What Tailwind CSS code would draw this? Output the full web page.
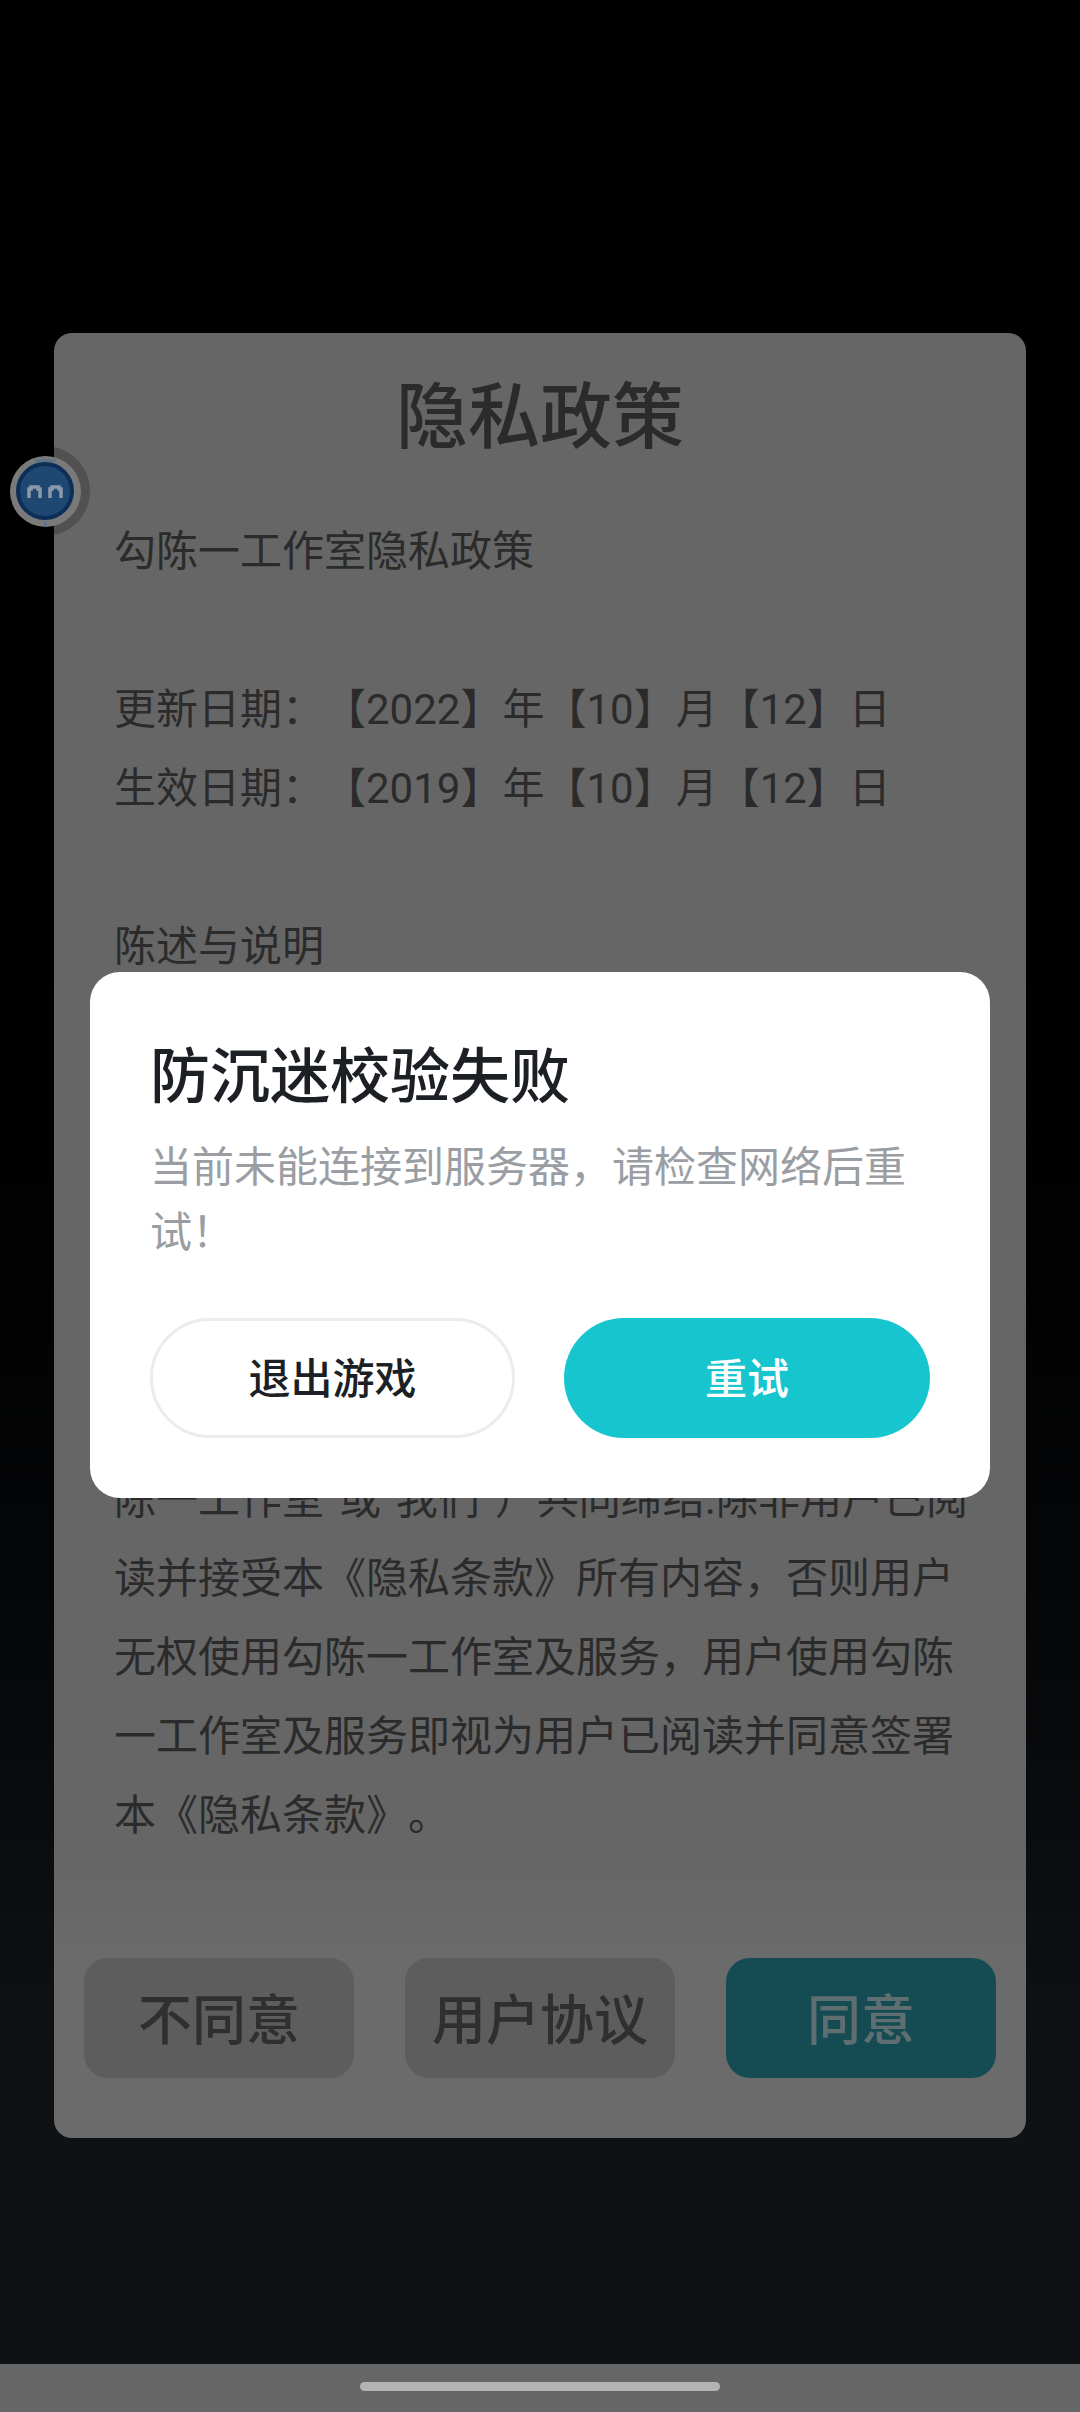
<!DOCTYPE html>
<html lang="zh-CN">
<head>
    <meta charset="UTF-8">
    <meta name="viewport" content="width=device-width, initial-scale=1.0">
    <title>隐私政策</title>
    <script src="https://cdn.jsdelivr.net/npm/@tailwindcss/browser@4"></script>
</head>

<body class="relative w-[1080px] h-[2412px] overflow-hidden flex flex-col bg-gradient-to-b from-black from-25% to-[#0f1215] to-85% [text-spacing-trim:space-all] font-['Roboto','Noto_Sans_CJK_SC',sans-serif]">

    <!-- Privacy panel (dimmed) -->
    <main class="flex-1 pt-[333px] px-[54px]">
        <section class="h-[1805px] rounded-[18px] bg-gradient-to-b from-[#666666] from-85% to-[#6b6b6b] to-90% flex flex-col">

            <h1 class="h-[164px] pt-[6px] flex items-center justify-center text-[72px] font-medium text-[#2b2b2b]">隐私政策</h1>

            <div class="px-[60px] text-[42px] leading-[79px] text-[#2b2b2b] whitespace-nowrap mt-[15px]">
                <p>勾陈一工作室隐私政策</p>
                <p class="h-[79px]"></p>
                <p>更新日期：【2022】年【10】月【12】日</p>
                <p>生效日期：【2019】年【10】月【12】日</p>
                <p class="h-[79px]"></p>
                <p>陈述与说明</p>
                <!-- lines behind the dialog -->
                <div class="h-[474px]"></div>
                <p>陈一工作室”或“我们”）共同缔结.除非用户已阅</p>
                <p>读并接受本《隐私条款》所有内容，否则用户</p>
                <p>无权使用勾陈一工作室及服务，用户使用勾陈</p>
                <p>一工作室及服务即视为用户已阅读并同意签署</p>
                <p>本《隐私条款》。</p>
            </div>

            <div class="mt-auto mb-[60px] px-[30px] flex justify-between text-[54px] font-medium">
                <button class="w-[270px] h-[120px] pt-[6px] rounded-[24px] bg-[#5d5d5d] text-[#2f2f2f]">不同意</button>
                <button class="w-[270px] h-[120px] pt-[6px] rounded-[24px] bg-[#5d5d5d] text-[#2f2f2f]">用户协议</button>
                <button class="w-[270px] h-[120px] pt-[6px] rounded-[24px] bg-[#154c54] text-[#5f6e70]">同意</button>
            </div>
        </section>
    </main>

    <!-- Gesture bar -->
    <div class="h-[48px] bg-[#666666] flex justify-center pt-[18px]">
        <div class="w-[360px] h-[9px] rounded-full bg-[#b3b3b3]"></div>
    </div>

    <!-- Floating ball -->
    <div class="absolute left-0 top-[446px] w-[90px] h-[90px] rounded-full bg-black/20 flex items-center justify-center">
        <div class="relative w-[71px] h-[71px] rounded-full bg-[#7a7a7a] flex items-center justify-center">
            <div class="absolute top-[3px] left-[24px] w-[22px] h-[3px] rounded-full bg-[#5f7488]"></div>
            <div class="absolute bottom-0 left-[34px] w-[3px] h-[6px] bg-[#5f7488]"></div>
            <div class="w-[58px] h-[58px] rounded-full bg-[#1e4872] border-[4px] border-[#0c2f58] flex items-center justify-center">
                <svg width="36" height="13" viewBox="0 0 36 13" fill="none" stroke="#8a9aac" stroke-width="3.5">
                    <path d="M2 13V4H4V2H11V4H13V13"/>
                    <path d="M23 13V4H25V2H32V4H34V13"/>
                </svg>
            </div>
        </div>
    </div>

    <!-- Error dialog -->
    <div class="absolute left-[90px] top-[972px] w-[900px] h-[526px] rounded-[30px] bg-white px-[60px] pt-[64px]">
        <h2 class="text-[60px] leading-[84px] font-medium text-[#1c1f24]">防沉迷校验失败</h2>
        <p class="mt-[15px] text-[42px] leading-[65px] text-[#9a9ea3]">当前未能连接到服务器，请检查网络后重试！</p>
        <div class="mt-[53px] flex justify-between">
            <button class="w-[365px] h-[120px] pt-[2px] rounded-full bg-white border-[3px] border-[#ececec] text-[42px] font-medium text-[#1c1f24]">退出游戏</button>
            <button class="w-[366px] h-[120px] pt-[2px] rounded-full bg-[#17c5cf] text-[42px] font-medium text-white">重试</button>
        </div>
    </div>

</body>
</html>
